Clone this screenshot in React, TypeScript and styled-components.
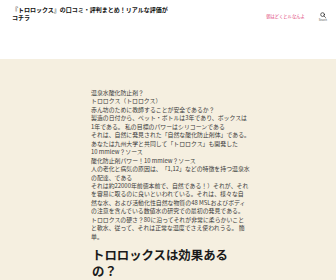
import React from "react";
import styled, { createGlobalStyle } from "styled-components";

const Global = createGlobalStyle`
  html, body { margin: 0; padding: 0; background: #f5efe0; }
  body { font-family: "Noto Sans CJK JP", "Noto Sans", sans-serif; }
`;

const Page = styled.div`
  width: 336px;
  height: 280px;
  overflow: hidden;
  display: flex;
  flex-direction: column;
`;

const Header = styled.header`
  height: 59px;
  flex: none;
  background: #ffffff;
  display: flex;
  align-items: flex-start;
  padding: 6px 9px 0 12px;
  box-sizing: border-box;
`;

const SiteTitle = styled.h1`
  margin: 0;
  width: 160px;
  font-size: 6px;
  line-height: 7.5px;
  font-weight: 700;
  color: #111;
`;

const Nav = styled.nav`
  margin-left: auto;
  display: flex;
  align-items: flex-start;
  gap: 14px;
  padding-top: 6px;
`;

const NavLink = styled.a`
  font-size: 4.3px;
  line-height: 6px;
  color: #e0457b;
  text-decoration: none;
  margin-top: 1px;
`;

const SearchBtn = styled.div`
  display: flex;
  flex-direction: column;
  align-items: center;
  gap: 1px;
  flex: none;
`;

const SearchIcon = styled.svg`
  display: block;
  width: 6px;
  height: 6px;
`;

const SearchLabel = styled.span`
  font-family: "Liberation Sans", sans-serif;
  font-size: 2.6px;
  line-height: 3px;
  color: #555;
`;

const Main = styled.main`
  flex: 1;
  background: #f5efe0;
  padding: 30px 0 0 91px;
`;

const Body = styled.p`
  margin: 0;
  width: 172px;
  font-size: 5.9px;
  line-height: 8.45px;
  color: #3a3a3a;
  white-space: nowrap;
`;

const Heading = styled.h2`
  margin: 7px 0 0 1px;
  font-size: 12.4px;
  line-height: 15.5px;
  font-weight: 700;
  color: #1a1a1a;
`;

const lines = [
  "温泉水酸化防止剤？",
  "トロロクス（トロロクス）",
  "赤ん坊のために教師することが安全であるか？",
  "製造の日付から、ペット・ボトルは3年であり、ボックスは",
  "1年である。 私の目標のパワーはシリコーンである",
  "それは、自然に発見された「自然な酸化防止剤体」である。",
  "あなたは九州大学と共同して「トロロクス」も開発した",
  "10 mmlew？ソース",
  "酸化防止剤パワー！10 mmlew？ソース",
  "人の老化と病気の原因は、「1,12」などの特徴を持つ温泉水",
  "の配達、である",
  "それは約22000年前徳本前で、自然である！）それが、それ",
  "を容易に取るのに良いといわれている。それは、様々な自",
  "然な水、および活動化性自然な物質の48 MSLおよびボディ",
  "の注意を含んでいる数値水の研究での最初の発見である。",
  "トロロクスの硬さ？80に沿ってそれが非常に柔らかいこと",
  "と軟水、従って、それは正常な温度でさえ使われうる。 簡",
  "単。",
];

export default function App() {
  return (
    <Page>
      <Global />
      <Header>
        <SiteTitle>
          『トロロックス』の口コミ・評判まとめ！リアルな評価が
          <br />
          コチラ
        </SiteTitle>
        <Nav>
          <NavLink href="#">朝はどくとルなんよ</NavLink>
          <SearchBtn>
            <SearchIcon viewBox="0 0 12 12" fill="none" stroke="#222" strokeWidth="1.4" strokeLinecap="round">
              <circle cx="5.2" cy="5.2" r="3.8" />
              <line x1="8" y1="8" x2="11" y2="11" />
            </SearchIcon>
            <SearchLabel>Search</SearchLabel>
          </SearchBtn>
        </Nav>
      </Header>
      <Main>
        <Body>
          {lines.map((l, i) => (
            <React.Fragment key={i}>
              {l}
              {i < lines.length - 1 && <br />}
            </React.Fragment>
          ))}
        </Body>
        <Heading>
          トロロックスは効果ある
          <br />
          の？
        </Heading>
      </Main>
    </Page>
  );
}
